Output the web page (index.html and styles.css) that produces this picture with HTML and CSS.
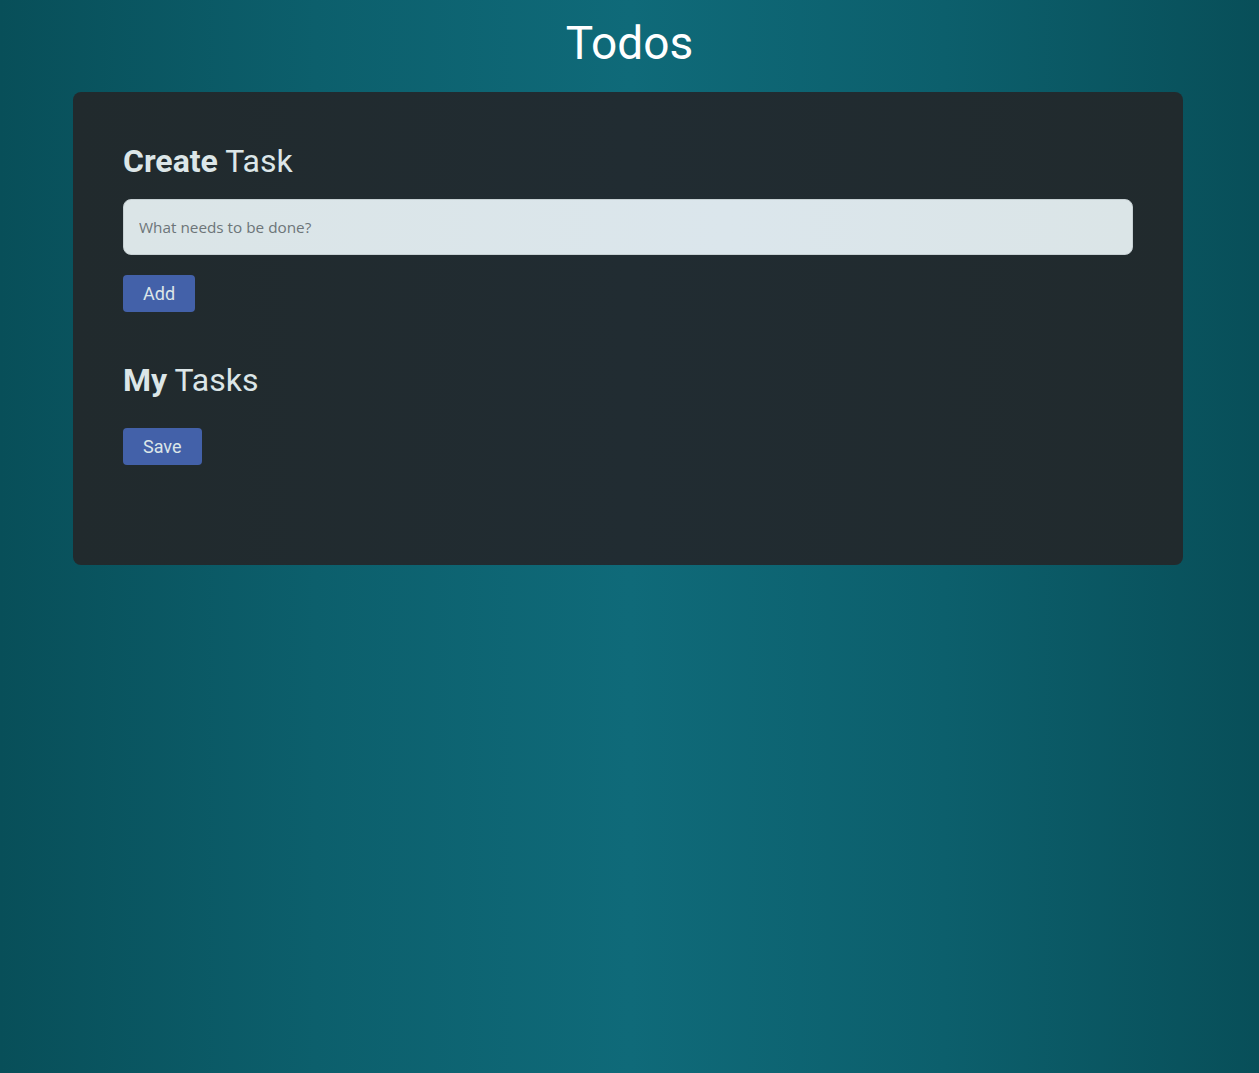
FILE: index.html
```html
<!DOCTYPE html>
<html lang="en">
<head>
<meta charset="utf-8">
<title>Todos</title>
<link rel="stylesheet" href="styles.css">
</head>
<body>
<header class="page-header">
  <h1 class="page-title">Todos</h1>
</header>
<main class="card">
  <section class="create">
    <h2 class="section-title"><strong>Create</strong> Task</h2>
    <input class="task-input" type="text" placeholder="What needs to be done?">
    <button class="btn">Add</button>
  </section>
  <section class="tasks">
    <h2 class="section-title"><strong>My</strong> Tasks</h2>
    <ul class="task-list"></ul>
    <button class="btn">Save</button>
  </section>
</main>
</body>
</html>
```

FILE: styles.css
```css
html, body {
  margin: 0;
  min-height: 100%;
}
body {
  min-height: 1073px;
  font-family: Roboto, "Liberation Sans", sans-serif;
  background: linear-gradient(90deg, #084f59 0%, #0c5f6c 25%, #0f6a79 50%, #0c5f6c 75%, #084f59 100%);
  color: #dce6e8;
  padding-bottom: 1px;
}
.page-header {
  height: 92px;
  display: flex;
  justify-content: center;
}
.page-title {
  margin: 16px 0 0;
  font-size: 46px;
  font-weight: 400;
  line-height: 1.2;
  color: #ffffff;
}
.card {
  margin: 0 76px 0 73px;
  background: linear-gradient(90deg, #212a2d 0%, #212c32 50%, #212a2d 100%);
  border-radius: 8px;
  padding: 50px 50px 100px;
  display: flex;
  flex-direction: column;
}
.section-title {
  margin: 0 0 19px;
  font-size: 32px;
  font-weight: 400;
  line-height: 1.2;
  color: #dce6e8;
}
.section-title strong {
  font-weight: 700;
}
.create {
  display: flex;
  flex-direction: column;
  align-items: flex-start;
  margin-bottom: 49px;
}
.tasks {
  display: flex;
  flex-direction: column;
  align-items: flex-start;
}
.task-input {
  box-sizing: border-box;
  width: 100%;
  height: 56px;
  margin: 0 0 20px;
  padding: 0 15px;
  border: 1px solid #c6d0d3;
  border-radius: 8px;
  background: linear-gradient(90deg, #dbe5e7 0%, #dbe6ec 60%, #dbe5e7 100%);
  font-family: "Open Sans", sans-serif;
  font-size: 15.3px;
  color: #333;
  outline: none;
}
.task-input::placeholder {
  color: #6d7579;
}
.task-list {
  margin: 0 0 9px;
  padding: 0;
  list-style: none;
}
.btn {
  height: 37px;
  padding: 0 20px;
  border: none;
  border-radius: 4px;
  background: #4361a9;
  color: #dce6e8;
  font-family: Roboto, "Liberation Sans", sans-serif;
  font-size: 18px;
  font-weight: 400;
  cursor: pointer;
}
```
